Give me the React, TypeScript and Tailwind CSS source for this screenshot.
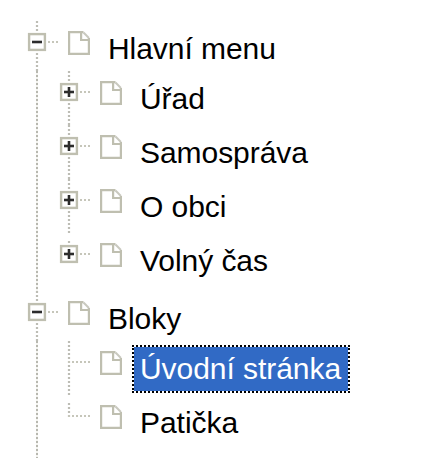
type Kind = 'plus' | 'minus' | 'leaf';

interface TreeItem {
  label: string;
  kind: Kind;
  selected?: boolean;
  children?: TreeItem[];
}

const tree: TreeItem[] = [
  {
    label: 'Hlavní menu',
    kind: 'minus',
    children: [
      { label: 'Úřad', kind: 'plus' },
      { label: 'Samospráva', kind: 'plus' },
      { label: 'O obci', kind: 'plus' },
      { label: 'Volný čas', kind: 'plus' },
    ],
  },
  {
    label: 'Bloky',
    kind: 'minus',
    children: [
      { label: 'Úvodní stránka', kind: 'leaf', selected: true },
      { label: 'Patička', kind: 'leaf' },
    ],
  },
];

interface ConnectorProps {
  kind: Kind;
  last?: boolean;
  height: number;
}

// Dotted lines with the expand / collapse box
function Connector({ kind, last = false, height }: ConnectorProps) {
  const leaf = kind === 'leaf';
  const end = last ? (leaf ? 22 : 12) : height;
  return (
    <svg className="shrink-0" width="48" height={height} viewBox={`0 0 48 ${height}`} fill="none">
      <path d={`M17 ${last ? 8 : 0}V${end}`} stroke="#bdbdb5" strokeWidth="2.2" strokeDasharray="2 2" />
      <path d={leaf ? 'M16 21H38' : 'M28 21H38'} stroke="#c6c6ba" strokeWidth="2.2" strokeDasharray="2 2" />
      {!leaf && (
        <>
          <rect x="9.1" y="13.1" width="15.8" height="15.8" fill="#fff" stroke="#bfbfb0" strokeWidth="2.4" />
          <path d="M12 21H22" stroke="#2c2c2c" strokeWidth="2.6" />
          {kind === 'plus' && <path d="M17 16V26" stroke="#2c2c2c" strokeWidth="2.6" />}
        </>
      )}
    </svg>
  );
}

function FileIcon() {
  return (
    <svg className="mt-[10px] shrink-0" width="23" height="24" viewBox="0 0 23 24" fill="none">
      <path d="M15.5 1.1H1.1V22.9H20.9V7" stroke="#bfbfb0" strokeWidth="2.2" />
      <path d="M13.1 1.1V9H20.9" stroke="#bfbfb0" strokeWidth="2.2" />
      <path d="M15.5 1.5L20.9 7" stroke="#c9c9bf" strokeWidth="2" />
    </svg>
  );
}

interface RowProps {
  item: TreeItem;
  last?: boolean;
  height: number;
}

function Row({ item, last, height }: RowProps) {
  return (
    <div className="flex items-start">
      <Connector kind={item.kind} last={last} height={height} />
      <FileIcon />
      <span
        className={`ml-[9px] mt-[4px] -mb-[2px] h-[48px] border-2 border-dotted bg-clip-padding pr-[6.7px] pl-[6px] text-[30px] leading-[44px] tracking-[-0.05px] whitespace-nowrap ${
          item.selected ? 'border-black bg-[#316ac5] text-white' : 'border-transparent text-black'
        }`}
      >
        {item.label}
      </span>
    </div>
  );
}

export default function App() {
  return (
    <div className="h-[458px] w-[428px] overflow-hidden bg-white pt-[21px] pl-[20px] font-['Liberation_Sans',Arial,sans-serif]">
      <ul>
        {tree.map((node, i) => (
          <li key={node.label}>
            <Row item={node} height={50} />
            <div className="flex">
              {/* Trunk of the top level running past the children */}
              <div className={`flex w-8 shrink-0 pl-[16px] ${i === 0 ? 'h-[220px]' : 'h-[117px]'}`}>
                <div className="w-[2px] bg-[repeating-linear-gradient(to_bottom,#b8b8b0_0px,#b8b8b0_2px,#f4f4f0_2px,#f4f4f0_4px)]" />
              </div>
              <ul>
                {node.children?.map((child, j, all) => (
                  <li key={child.label} className="h-[54px]">
                    <Row item={child} last={j === all.length - 1} height={54} />
                  </li>
                ))}
              </ul>
            </div>
          </li>
        ))}
      </ul>
    </div>
  );
}
